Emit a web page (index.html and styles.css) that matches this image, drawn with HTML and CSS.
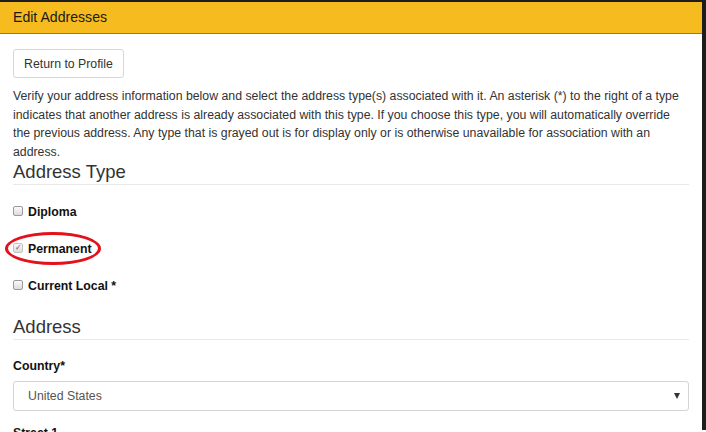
FILE: index.html
```html
<!DOCTYPE html>
<html>
<head>
    <link rel="stylesheet" href="styles.css">
</head>
<body>
    <div class="panel">
        <div class="panel-heading">Edit Addresses</div>
        <div class="panel-body">
            <button class="btn">Return to Profile</button>

            <p class="intro">Verify your address information below and select the address type(s) associated with it. An asterisk (*) to the right of a type indicates that another address is already associated with this type. If you choose this type, you will automatically override the previous address. Any type that is grayed out is for display only or is otherwise unavailable for association with an address.</p>

            <h3 class="section-title">Address Type</h3>

            <div class="type-list">
                <label class="type-item"><span class="box"></span>Diploma</label>
                <label class="type-item marked">
                    <span class="box disabled">&#10003;</span>Permanent
                    <span class="ring"></span>
                </label>
                <label class="type-item"><span class="box"></span>Current Local *</label>
            </div>

            <h3 class="section-title address">Address</h3>

            <div class="field">
                <div class="field-label">Country*</div>
                <div class="select">
                    <span>United States</span>
                    <span class="caret"></span>
                </div>
            </div>

            <div class="field street">
                <div class="field-label">Street 1</div>
            </div>
        </div>
    </div>
</body>
</html>
```

FILE: styles.css
```css
/* General Styling */
body {
    margin: 0;
    font-family: "Liberation Sans", Arial, sans-serif;
    font-size: 12.3px;
    color: #333;
    background-color: #fff;
    height: 432px;
    overflow: hidden;
}

.panel {
    border-top: 2px solid #1d1d1d;
    border-right: 4px solid #1d1d1d;
    height: 430px;
    box-sizing: border-box;
}

.panel-heading {
    background-color: #f6bc1f;
    border-bottom: 1px solid #9c7a16;
    height: 31px;
    line-height: 31px;
    padding: 0 13px;
    font-size: 14.1px;
    color: #1a1a1a;
}

.panel-body {
    padding: 15px 13px 0 13px;
}

/* Button */
.btn {
    display: block;
    font-family: inherit;
    font-size: 12.3px;
    color: #333;
    background: #fff;
    border: 1px solid #d6d6d6;
    border-radius: 3px;
    width: 111px;
    height: 29px;
    padding: 0;
}

.intro {
    margin: 9px 0 0;
    padding-right: 5px;
    line-height: 18.5px;
}

/* Section titles */
.section-title {
    margin: 0;
    font-size: 18.5px;
    line-height: 21px;
    font-weight: normal;
    color: #333;
    padding-bottom: 2px;
    border-bottom: 1px solid #e8e8e8;
}

.section-title.address {
    margin-top: 22px;
}

/* Address types */
.type-list {
    display: flex;
    flex-direction: column;
    gap: 21px;
    padding-top: 19px;
}

.type-item {
    position: relative;
    display: flex;
    align-items: center;
    gap: 5px;
    font-weight: bold;
    color: #111;
    height: 16px;
}

.box {
    width: 8px;
    height: 8px;
    border: 1px solid #9a9a9a;
    border-radius: 2px;
    background: linear-gradient(#fafafa, #dcdcdc);
    font-size: 8px;
    line-height: 8px;
    text-align: center;
    color: #777;
    margin-top: -3px;
}

.box.disabled {
    border-color: #c4c4c4;
    color: #8a8a8a;
}

/* Red circle drawn over the Permanent option */
.ring {
    position: absolute;
    left: -8px;
    top: -9px;
    width: 90px;
    height: 27px;
    border: 3px solid #e4101a;
    border-radius: 50%;
}

/* Fields */
.field {
    margin-top: 19px;
}

.field.street {
    margin-top: 15px;
}

.field-label {
    font-weight: bold;
    color: #111;
    line-height: 15px;
    margin-bottom: 7px;
}

.select {
    display: flex;
    justify-content: space-between;
    align-items: center;
    height: 28px;
    border: 1px solid #d4d4d4;
    border-radius: 3px;
    padding: 0 8px 0 14px;
    color: #555;
}

.caret {
    width: 0;
    height: 0;
    border-left: 3px solid transparent;
    border-right: 3px solid transparent;
    border-top: 6px solid #333;
}
```
